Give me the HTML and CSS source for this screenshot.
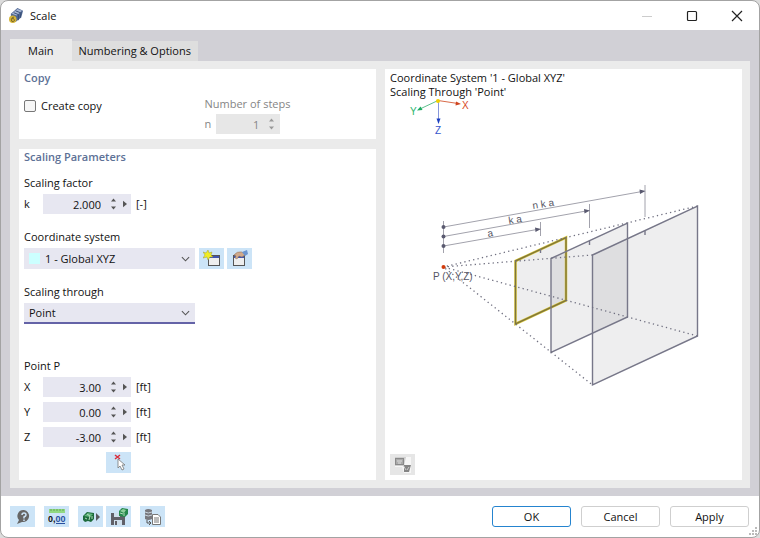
FILE: index.html
```html
<!DOCTYPE html>
<html lang="en">
<head>
<meta charset="utf-8">
<title>Scale</title>
<link rel="stylesheet" href="styles.css">
</head>
<body>
<svg class="defs" aria-hidden="true">
  <symbol id="steppers" viewBox="0 0 6 14"><path d="M0 4L3 0.500L6 4ZM0 10L3 13.500L6 10Z"/></symbol>
  <symbol id="more" viewBox="0 0 5 8"><path d="M0 0L5 4L0 8Z"/></symbol>
  <symbol id="chevron" viewBox="0 0 10 6"><path d="M1 1L5 5L9 1" fill="none" stroke="#555" stroke-width="1.200"/></symbol>
</svg>
<div class="window">
  <header class="titlebar">
    <svg class="app-icon" viewBox="0 0 16 16" aria-hidden="true">
      <path d="M2 6L9 0L15 3L13 10L7 15L2 12Z" fill="#4f6793"/>
      <path d="M3 6L9 1L14 3L8 8Z" fill="#a8b8d6"/>
      <path d="M5 5L10 7M7 3L12 5M10 7V13M13 4L12 10" stroke="#354b72" fill="none"/>
      <circle cx="4" cy="12" r="4" fill="#d5b536"/>
      <path d="M5.500 9.500Q2.500 10 2.500 12.500T4.500 14.500T5.500 12T2.800 12" stroke="#75622b" fill="none"/>
    </svg>
    <h1>Scale</h1>
    <div class="window-controls">
      <button type="button" aria-label="Minimize" disabled><svg viewBox="0 0 12 12"><path d="M1 6.500H11" stroke="#ccc"/></svg></button>
      <button type="button" aria-label="Maximize"><svg viewBox="0 0 12 12"><rect x="1.500" y="1.500" width="9" height="9" rx="1" fill="none" stroke="#222" stroke-width="1.200"/></svg></button>
      <button type="button" aria-label="Close"><svg viewBox="0 0 12 12"><path d="M1 1L11 11M11 1L1 11" stroke="#222" stroke-width="1.200"/></svg></button>
    </div>
  </header>

  <main class="content">
    <div class="tabs" role="tablist">
      <button type="button" class="tab tab-active" role="tab" aria-selected="true">Main</button>
      <button type="button" class="tab" role="tab" aria-selected="false">Numbering &amp; Options</button>
    </div>
    <div class="panel" role="tabpanel">
      <div class="settings">
        <section class="card copy">
          <h2>Copy</h2>
          <div class="copy-grid">
            <label class="check"><input type="checkbox">Create copy</label>
            <div class="steps">
              <div class="caption">Number of steps</div>
              <div class="row">
                <label for="n">n</label>
                <div class="spin spin-disabled">
                  <input id="n" value="1" disabled>
                  <button type="button" aria-label="Step" disabled><svg class="steppers"><use href="#steppers"/></svg></button>
                </div>
              </div>
            </div>
          </div>
        </section>

        <section class="card parameters">
          <h2>Scaling Parameters</h2>
          <div class="group">
            <div class="caption">Scaling factor</div>
            <div class="row">
              <label class="symbol" for="k">k</label>
              <div class="spin">
                <input id="k" value="2.000">
                <button type="button" aria-label="Step"><svg class="steppers"><use href="#steppers"/></svg></button>
                <button type="button" aria-label="More"><svg class="more"><use href="#more"/></svg></button>
              </div>
              <span class="unit">[-]</span>
            </div>
          </div>
          <div class="group">
            <label class="caption" for="system">Coordinate system</label>
            <div class="row">
              <div class="combo">
                <span class="swatch"></span>
                <select id="system"><option>1 - Global XYZ</option></select>
                <svg class="chevron"><use href="#chevron"/></svg>
              </div>
              <div class="combo-actions">
                <button type="button" class="tool" aria-label="New coordinate system">
                  <svg viewBox="0 0 18 18"><rect x="5.500" y="5.500" width="11" height="10" fill="#eee" stroke="#555"/><path d="M6 7H16" stroke="#4055b0" stroke-width="2"/><path d="M5 0L6 3L9 2L8 5L10 7L7 7L5 10L4 7L0 8L2 5L0 2L3 3Z" fill="#f1ed22" stroke="#9d9d36" stroke-width=".5"/></svg>
                </button>
                <button type="button" class="tool" aria-label="Edit coordinate system">
                  <svg viewBox="0 0 18 18"><rect x="2.500" y="5.500" width="11" height="10" fill="#eee" stroke="#555"/><path d="M3 7H13" stroke="#4055b0" stroke-width="2"/><path d="M3 5Q6 1 11 2L14 5L11 7L8 6L6 9L4 8L5 6Z" fill="#d0a98b" stroke="#8d725f" stroke-width=".5"/><path d="M11 2L16 0L17 4L14 6Z" fill="#6c96cf"/></svg>
                </button>
              </div>
            </div>
          </div>
          <div class="group">
            <label class="caption" for="through">Scaling through</label>
            <div class="row">
              <div class="combo combo-focus">
                <select id="through"><option>Point</option></select>
                <svg class="chevron"><use href="#chevron"/></svg>
              </div>
            </div>
          </div>
          <div class="group point">
            <div class="caption">Point P</div>
            <div class="coordinates">
              <div class="row">
                <label class="symbol" for="x">X</label>
                <div class="spin"><input id="x" value="3.00"><button type="button" aria-label="Step X"><svg class="steppers"><use href="#steppers"/></svg></button><button type="button" aria-label="More X"><svg class="more"><use href="#more"/></svg></button></div>
                <span class="unit">[ft]</span>
              </div>
              <div class="row">
                <label class="symbol" for="y">Y</label>
                <div class="spin"><input id="y" value="0.00"><button type="button" aria-label="Step Y"><svg class="steppers"><use href="#steppers"/></svg></button><button type="button" aria-label="More Y"><svg class="more"><use href="#more"/></svg></button></div>
                <span class="unit">[ft]</span>
              </div>
              <div class="row">
                <label class="symbol" for="z">Z</label>
                <div class="spin"><input id="z" value="-3.00"><button type="button" aria-label="Step Z"><svg class="steppers"><use href="#steppers"/></svg></button><button type="button" aria-label="More Z"><svg class="more"><use href="#more"/></svg></button></div>
                <span class="unit">[ft]</span>
              </div>
              <div class="pick">
                <button type="button" class="tool" aria-label="Pick point">
                  <svg viewBox="0 0 18 18"><path d="M5 1L10 5M10 1L5 5" stroke="#d9303e" stroke-width="1.500"/><path d="M8 5V14L10 12L12 16L14 15L12 11H15Z" fill="#fff" stroke="#777" stroke-width=".8"/></svg>
                </button>
              </div>
            </div>
          </div>
        </section>
      </div>

      <section class="card preview">
        <p>Coordinate System '1 - Global XYZ'<br>Scaling Through 'Point'</p>
        <svg class="diagram" viewBox="385 99 357 355" role="img" aria-label="Scaling diagram">
          <g fill="none">
            <path d="M438 100.500L458 103.500" stroke="#d96b4a"/>
            <path d="M438 100.500L421 108.500" stroke="#5cc08c"/>
            <path d="M438.500 100.500V119" stroke="#8797db"/>
          </g>
          <path d="M461 104L455.500 105.500L456 101.500Z" fill="#cf4520"/>
          <path d="M417 110.500L420.500 106.500L422.500 110Z" fill="#1eaa60"/>
          <path d="M438.500 124L436.500 118.500H440.500Z" fill="#1c3fc0"/>
          <circle cx="438" cy="101" r="2" fill="#f0d000"/>
          <g class="axis-text">
            <text x="462" y="109" fill="#d94a26">X</text>
            <text x="410" y="115" fill="#2bb56c">Y</text>
            <text x="435" y="134" fill="#3556cc">Z</text>
          </g>

          <g class="planes">
            <path d="M515.500 261L566 237.500V300.500L515.500 324Z"/>
            <path d="M551 258.500L627.500 223V317L551 352.500Z"/>
            <path d="M592.500 255L697.500 206V336L592.500 385Z"/>
          </g>
          <path d="M515.500 261L566 237.500V300.500L515.500 324Z" fill="none" stroke="#d8c83c" stroke-width="2.500"/>
          <g class="edges">
            <path d="M515.500 261L566 237.500V300.500L515.500 324Z" stroke="#80753a"/>
            <path d="M551 258.500L627.500 223V317L551 352.500Z"/>
            <path d="M592.500 255L697.500 206V336L592.500 385Z"/>
            <path d="M540.500 249V253M589.500 241V245M645 231V235"/>
          </g>
          <g class="rays">
            <path d="M697.500 206L443.500 267L592.500 255M697.500 336L443.500 267L592.500 385"/>
          </g>
          <g class="dimensions">
            <path d="M443.500 221V253M540.500 222V236M589.500 204V228M645 185V217"/>
            <path d="M443.500 246L537 229.500M443.500 236.500L586 211M443.500 227L642 191.500"/>
          </g>
          <g fill="#5a5a70">
            <path d="M541 229L535 227.500L535.500 232ZM590 210.500L584 209L584.500 213.500ZM645.500 191L639.500 189.500L640 194Z"/>
            <circle cx="443.500" cy="227" r="2"/><circle cx="443.500" cy="236.500" r="2"/><circle cx="443.500" cy="246" r="2"/>
          </g>
          <circle cx="443.500" cy="267" r="2" fill="#d23b0b"/>
          <g class="dim-text">
            <text transform="translate(488 237) rotate(-9)">a</text>
            <text transform="translate(509 224) rotate(-9)">k a</text>
            <text transform="translate(533 209) rotate(-9)">n k a</text>
            <text x="433" y="280">P (X,Y,Z)</text>
          </g>
        </svg>
        <button type="button" class="tool tool-gray" aria-label="Preview settings" disabled>
          <svg viewBox="0 0 18 18"><path d="M1 1H17V17H10L8 11H1Z" fill="#f6f6f6"/><path d="M1 1H12L10 10H1Z" fill="#cfcfcf"/><rect x="1.500" y="2.500" width="8" height="6" fill="#aaa" stroke="#8a8a8a"/><path d="M3 5H8M4 7H7" stroke="#ddd"/><path d="M10 9H17L15 16H10Z" fill="#858585"/><path d="M9 9L12 14M15 11L13 14" stroke="#ccc"/></svg>
        </button>
      </section>
    </div>
  </main>

  <footer class="footer">
    <div class="tools">
      <button type="button" class="tool" aria-label="Help">
        <svg viewBox="0 0 18 18"><path d="M10 2A6 6 0 1 1 8 14L3 16L5 12A6 6 0 0 1 10 2" fill="#666"/><path d="M8 7Q8 5 10 5T12 7Q12 8 10 9V10.500M10 11.500V13" stroke="#cce4f7" stroke-width="1.500" fill="none"/></svg>
      </button>
      <button type="button" class="tool tool-spaced" aria-label="Units and decimal places">
        <svg viewBox="0 0 18 18"><rect x="1" y="1" width="16" height="4" fill="#91d982"/><path d="M3 1V3M6 1V3M9 1V3M12 1V3M15 1V3" stroke="#64a857"/><text x="0" y="14" class="zero">0,<tspan fill="#2850a0">00</tspan></text><path d="M8 15.500H17" stroke="#2850a0"/></svg>
      </button>
      <button type="button" class="tool tool-spaced" aria-label="Load parameters">
        <svg viewBox="0 0 18 18"><path d="M1 8L5 4L12 5V11L9 14L6 13L3 14L1 12Z" fill="#1c6b3c"/><path d="M2 8L6 5L11 6L8 9Z" fill="#5fb57a"/><path d="M5 6L8 8L7 12M3 10L5 11M10 8V11" stroke="#b3dcbc" fill="none"/><path d="M14 5L18 9L14 13Z" fill="#5a5a60"/></svg>
      </button>
      <button type="button" class="tool tool-near" aria-label="Save parameters">
        <svg viewBox="0 0 18 18"><path d="M1 5H13L15 7V17H1Z" fill="#606068"/><path d="M4 5H10V9H4ZM4 12H12V17H4Z" fill="#cfdfec"/><path d="M6 13V17" stroke="#606068" stroke-width="2"/><path d="M9 3L12 0L18 1V6L15 9L9 8Z" fill="#25884c"/><path d="M10 3L13 1L16 2L14 5Z" fill="#8ecf9c"/><path d="M14 5V8M10 5L13 6" stroke="#b3dcbc"/></svg>
      </button>
      <button type="button" class="tool tool-spaced" aria-label="Copy table">
        <svg viewBox="0 0 18 18"><path d="M1 2Q4 0 8 2V11Q4 13 1 11Z" fill="#77777d"/><path d="M1 4Q4 6 8 4M1 7Q4 9 8 7" fill="none" stroke="#c9d5df"/><path d="M3 12V15H7M5 13L7 15L5 17" fill="none" stroke="#555"/><path d="M8.500 6.500H14L16.500 9V16.500H8.500Z" fill="#fff" stroke="#777"/><path d="M10 10H15M10 12H15M10 14H15" stroke="#777"/></svg>
      </button>
    </div>
    <div class="actions">
      <button type="button" class="action action-default">OK</button>
      <button type="button" class="action">Cancel</button>
      <button type="button" class="action">Apply</button>
    </div>
    <svg class="grip" viewBox="0 0 8 8" aria-hidden="true"><path d="M6 0h2v2H6ZM3 3h2v2H3ZM6 3h2v2H6ZM0 6h2v2H0ZM3 6h2v2H3ZM6 6h2v2H6Z" fill="#bbb"/></svg>
  </footer>
</div>
</body>
</html>
```

FILE: styles.css
```css
* {
  box-sizing: border-box;
}

body {
  margin: 0;
  background: #dcdcdc;
  color: #111;
  font-family: "Open Sans", "Noto Sans", sans-serif;
  font-size: 11px;
  line-height: 14px;
}

h1, h2, p {
  margin: 0;
  font-size: 11px;
}

h1 {
  font-weight: 400;
}

h2 {
  color: #5d7196;
  font-weight: 600;
}

button, input, select {
  margin: 0;
  padding: 0;
  border: 0;
  background: none;
  color: inherit;
  font: inherit;
}

svg {
  display: block;
}

.defs {
  position: absolute;
  width: 0;
  height: 0;
}

.window {
  display: flex;
  flex-direction: column;
  min-height: 100vh;
  overflow: hidden;
  border: 1px solid #a3a3a3;
  border-radius: 8px;
  background: #fff;
}

.titlebar {
  display: flex;
  align-items: center;
  gap: 6px;
  height: 29px;
  padding-left: 8px;
}

.app-icon {
  width: 15px;
  height: 15px;
}

.window-controls {
  display: flex;
  margin-left: auto;
}

.window-controls button {
  display: grid;
  place-items: center;
  width: 45px;
  height: 28px;
}

.window-controls svg {
  width: 12px;
  height: 12px;
}

.content {
  display: flex;
  flex: 1;
  flex-direction: column;
  padding: 9px 9px 8px;
  background: #d1d0d6;
}

.tabs {
  display: flex;
  align-items: flex-end;
}

.tab {
  height: 20px;
  padding: 0 7px;
  background: #dedede;
}

.tab-active {
  height: 22px;
  padding: 2px 18px 0;
  background: #ebebeb;
}

.panel {
  display: grid;
  flex: 1;
  grid-template-columns: 1fr 1fr;
  gap: 9px;
  padding: 8px 8px 8px 9px;
  background: #ebebeb;
}

.settings {
  display: flex;
  flex-direction: column;
  gap: 10px;
}

.card {
  background: #fff;
}

.copy {
  padding: 2px 5px 5px;
}

.copy-grid {
  display: grid;
  grid-template-columns: 1fr 1fr;
  padding-top: 12px;
}

.check {
  display: flex;
  align-items: center;
  gap: 5px;
  height: 17px;
}

.check input {
  width: 12px;
  height: 12px;
  appearance: none;
  border: 1px solid #777;
  border-radius: 2px;
  background: #f6f6f6;
}

.steps {
  padding-left: 7px;
  color: #858585;
}

.steps .row {
  gap: 5px;
}

.parameters {
  flex: 1;
  padding: 1px 5px 7px;
}

.group {
  padding-top: 16px;
}

.parameters h2 + .group {
  padding-top: 12px;
}

.caption {
  display: block;
  height: 18px;
}

.steps .caption {
  height: 17px;
}

.row {
  display: flex;
  align-items: center;
}

.symbol {
  width: 19px;
}

.spin {
  display: flex;
  align-items: center;
  width: 88px;
  height: 20px;
  background: #e7e7f1;
}

.spin input {
  flex: 1;
  min-width: 0;
  height: 20px;
  text-align: right;
}

.spin button {
  display: grid;
  place-items: center;
  width: 12px;
  height: 20px;
  fill: #555;
}

.spin button:first-of-type {
  margin-left: 6px;
}

.spin-disabled {
  width: 64px;
  padding-right: 3px;
  background: #e7e7e7;
}

.spin-disabled button {
  fill: #999;
}

.steppers {
  width: 5px;
  height: 12px;
}

.more {
  width: 4px;
  height: 8px;
}

.unit {
  padding-left: 5px;
}

.combo {
  display: flex;
  align-items: center;
  width: 171px;
  height: 21px;
  padding: 0 5px;
  background: #e7e7f1;
}

.combo select {
  flex: 1;
  appearance: none;
}

.combo-focus {
  border-bottom: 2px solid #6463a7;
}

.chevron {
  width: 9px;
  height: 6px;
}

.swatch {
  width: 11px;
  height: 11px;
  margin-right: 5px;
  background: #ccffff;
}

.combo-actions {
  display: flex;
  gap: 3px;
  padding-left: 4px;
}

.tool {
  display: grid;
  place-items: center;
  width: 25px;
  height: 21px;
  background: #cce4f7;
}

.tool svg {
  width: 18px;
  height: 18px;
}

.tool-gray {
  margin-left: 5px;
  background: #e6e6e6;
}

.tool-spaced {
  margin-left: 9px;
}

.tool-near {
  margin-left: 3px;
}

.point {
  padding-top: 35px;
}

.coordinates {
  display: grid;
  gap: 5px;
}

.pick {
  display: flex;
  justify-content: flex-end;
  width: 107px;
}

.preview {
  display: flex;
  flex-direction: column;
  padding: 2px 0 5px;
}

.preview p {
  padding-left: 5px;
}

.diagram {
  flex: 1;
  width: 100%;
  min-height: 0;
  overflow: visible;
}

.axis-text, .dim-text {
  font-family: "Liberation Sans", sans-serif;
  font-size: 10px;
}

.dim-text {
  fill: #555564;
}

.planes {
  fill: #606070;
  fill-opacity: .11;
}

.edges {
  fill: none;
  stroke: #777789;
  stroke-width: 1.4;
}

.rays {
  fill: none;
  stroke: #707080;
  stroke-width: 1.3;
  stroke-dasharray: 1.3 3.2;
}

.dimensions {
  fill: none;
  stroke: #a2a2ac;
}

.footer {
  position: relative;
  display: flex;
  align-items: center;
  justify-content: space-between;
  height: 41px;
  padding: 0 10px 0 9px;
}

.tools, .actions {
  display: flex;
}

.zero {
  fill: #111;
  font-family: "Liberation Sans", sans-serif;
  font-size: 9px;
  font-weight: 700;
}

.actions {
  gap: 10px;
}

.action {
  width: 79px;
  height: 21px;
  border: 1px solid #cfcfcf;
  border-radius: 3px;
  background: #fff;
}

.action-default {
  border-color: #2584cf;
}

.grip {
  position: absolute;
  right: 2px;
  bottom: 2px;
  width: 8px;
  height: 8px;
}
```
